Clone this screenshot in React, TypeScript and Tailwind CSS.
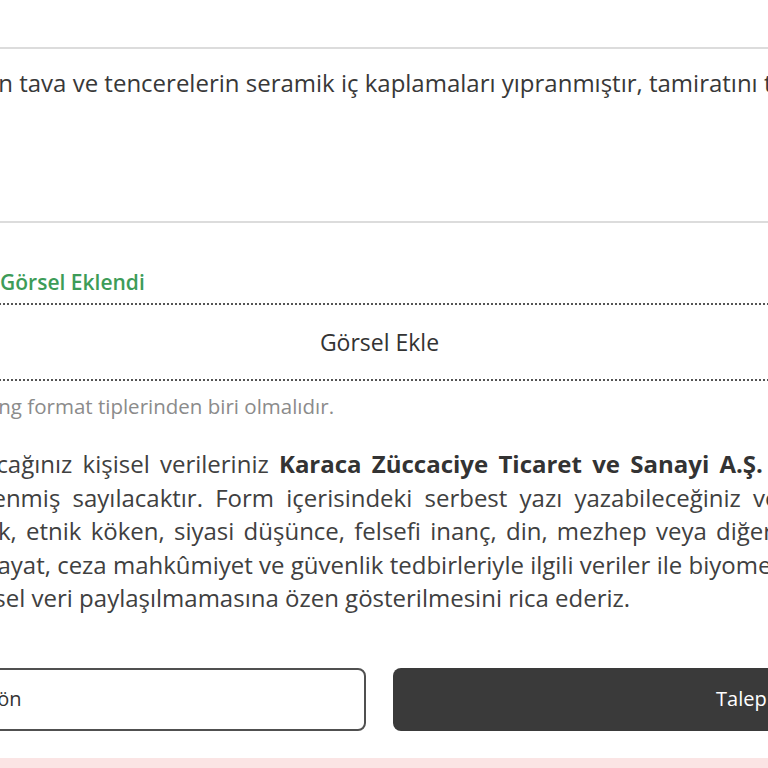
import React from 'react';

const font = { fontFamily: '"Open Sans", "Noto Sans", sans-serif' };

export default function App() {
  return (
    <div className="w-full h-[768px] overflow-hidden bg-white" style={font}>
      {/* form is wider than the window; its left part is off screen */}
      <div className="w-[1571px] -ml-[406px] pt-[47px]">
        {/* complaint text */}
        <textarea
          readOnly
          defaultValue="Geçtiğimiz sene mağazanızdan alınan tava ve tencerelerin seramik iç kaplamaları yıpranmıştır, tamiratını talep ediyorum."
          className="block w-full h-[176px] resize-none border-y-2 border-[#dcdcdc] pl-0.5 pr-4 pt-[17px] text-[24px] leading-[34px] text-[#383838] outline-none"
          style={font}
        />

        {/* upload */}
        <p className="mt-[45px] pl-4 text-[21px] leading-[28px] font-semibold text-[#3d9c58] whitespace-nowrap">
          Ürün fotoğrafları başarıyla yüklendi: 3 Görsel Eklendi
        </p>
        <button className="mt-[7px] w-full h-[78px] border-y-2 border-dotted border-[#555] text-[23px] text-[#333]" style={font}>
          Görsel Ekle
        </button>
        <p className="mt-[12px] pl-[10px] text-[20.5px] leading-[26px] text-[#8b8b8b] whitespace-nowrap">
          Görsel en fazla 5 MB olmalı ve jpg, jpeg, png format tiplerinden biri olmalıdır.
        </p>

        {/* KVKK notice */}
        <div className="mt-[28px] pl-0.5 text-[24px] leading-[33.5px] text-[#404040] whitespace-nowrap">
          <div className="[word-spacing:4px] [text-indent:-6px]">
            Bu form aracılığıyla bizimle paylaşacağınız kişisel verileriniz{' '}
            <b className="font-bold text-[#333]">Karaca Züccaciye Ticaret ve Sanayi A.Ş.</b> tarafından
          </div>
          <div className="[word-spacing:6px]">
            Aydınlatma Metni çerçevesinde işlenmiş sayılacaktır. Form içerisindeki serbest yazı yazabileceğiniz ve görsel
          </div>
          <div className="[word-spacing:3px]">
            ekleyebileceğiniz tüm alanlarında ırk, etnik köken, siyasi düşünce, felsefi inanç, din, mezhep veya diğer inançlar, kılık ve kıyafet, dernek, vakıf
          </div>
          <div>
            ya da sendika üyeliği, sağlık, cinsel hayat, ceza mahkûmiyet ve güvenlik tedbirleriyle ilgili veriler ile biyometrik ve genetik veriler gibi
          </div>
          <div>
            özel nitelikli hassas herhangi bir kişisel veri paylaşılmamasına özen gösterilmesini rica ederiz.
          </div>
        </div>

        {/* actions */}
        <div className="mt-[53px] grid grid-cols-2 gap-[27px]">
          <button className="h-[63px] rounded-lg border-2 border-[#505050] bg-white text-[20px] text-[#333]" style={font}>
            Geri Dön
          </button>
          <button className="h-[63px] rounded-lg bg-[#3a3a3a] text-[20px] text-white" style={font}>
            Talep Oluştur
          </button>
        </div>
      </div>

      <div className="mt-[27px] h-[40px] bg-[#fbe4e4]" />
    </div>
  );
}
